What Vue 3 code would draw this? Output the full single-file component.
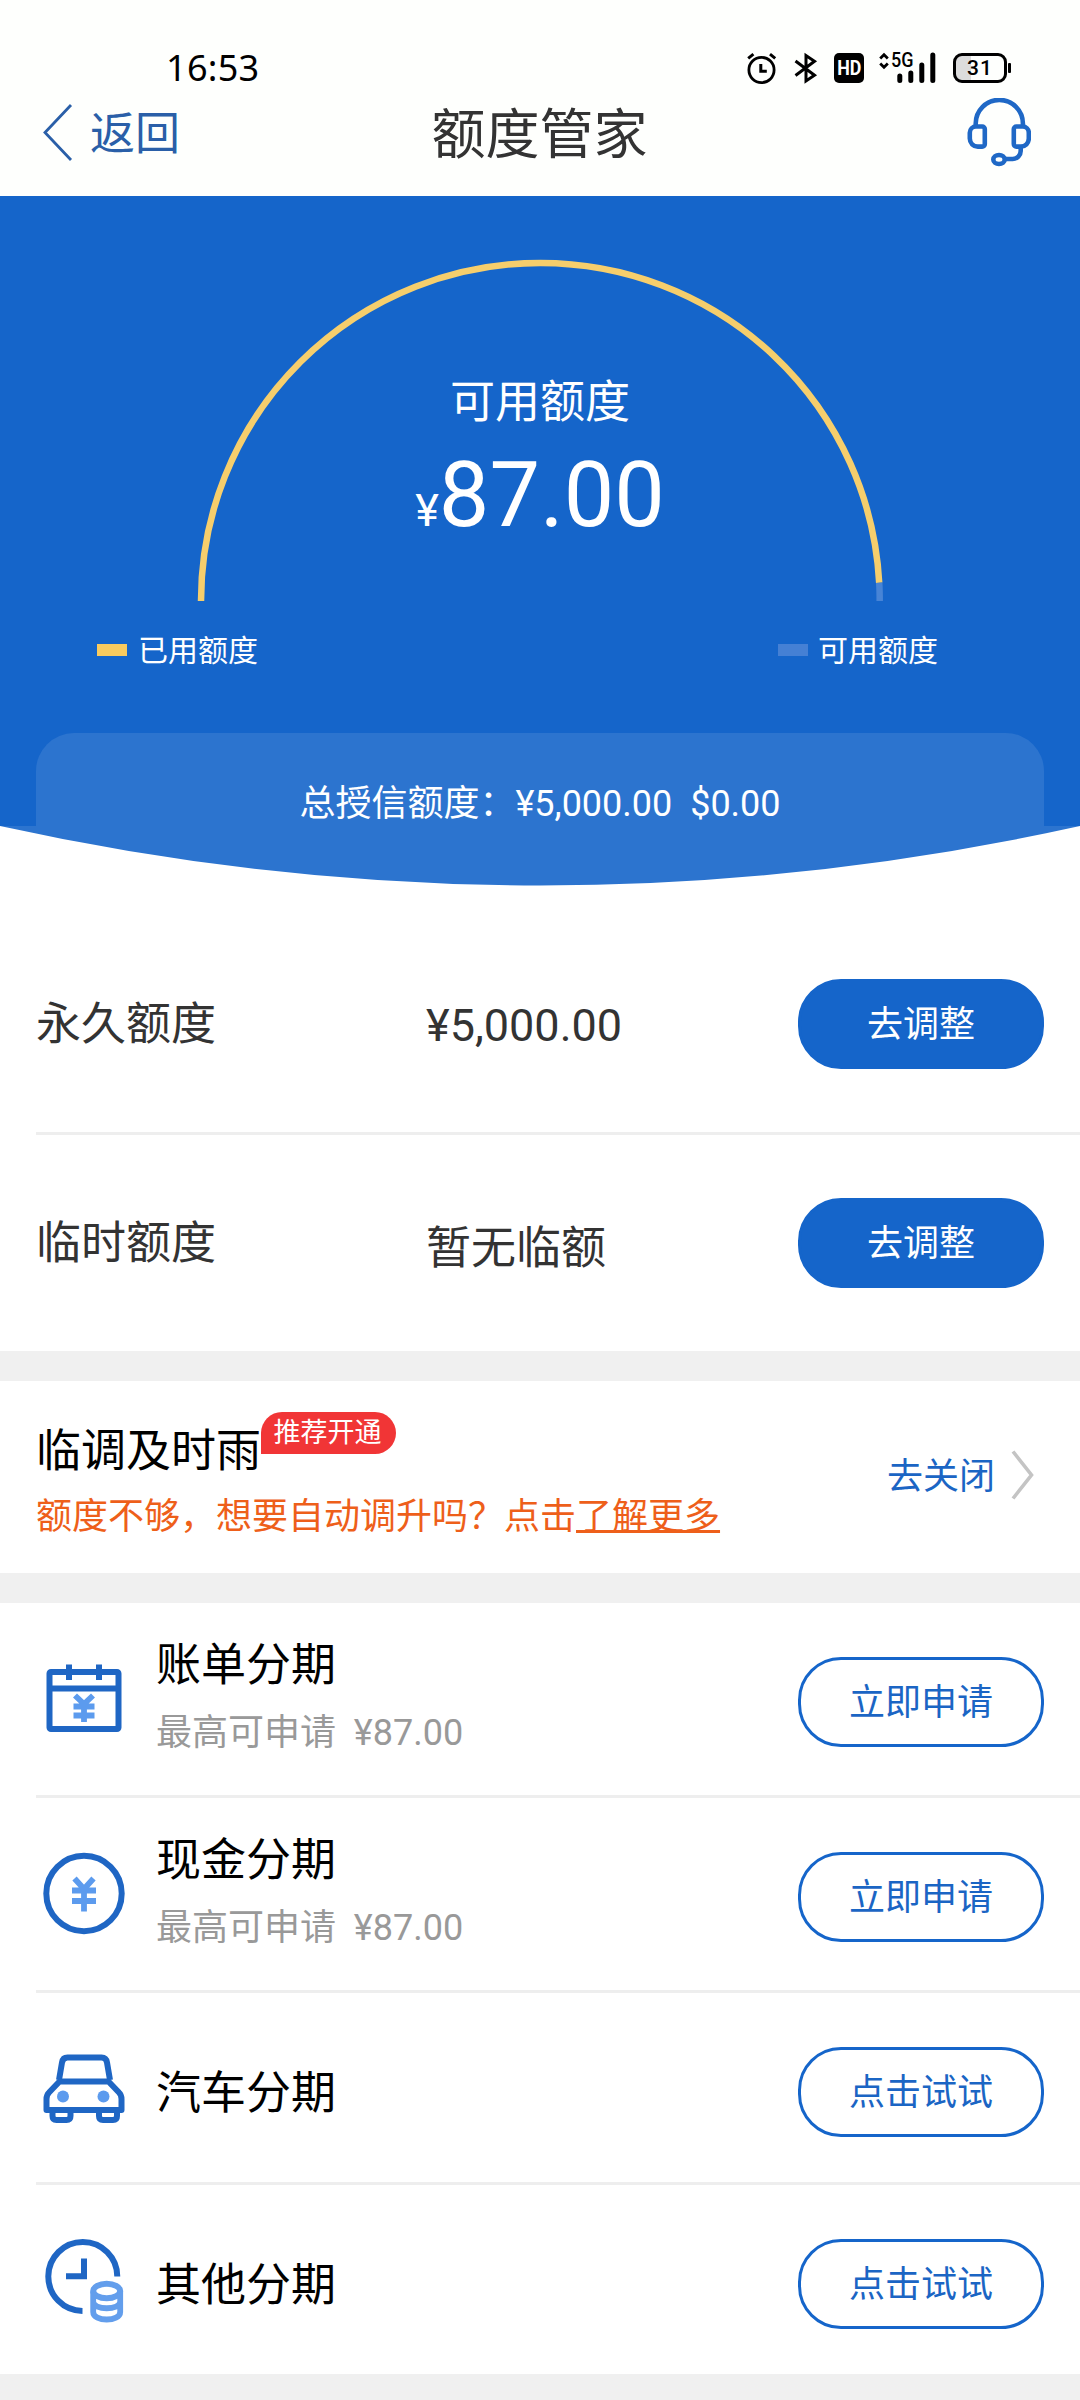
<script setup>
const limits = [
  { name: '永久额度', value: '¥5,000.00' },
  { name: '临时额度', value: '暂无临额' },
]

const plans = [
  { icon: 'bill', title: '账单分期', amount: '¥87.00', action: '立即申请' },
  { icon: 'cash', title: '现金分期', amount: '¥87.00', action: '立即申请' },
  { icon: 'car', title: '汽车分期', action: '点击试试' },
  { icon: 'other', title: '其他分期', action: '点击试试' },
]
</script>

<template>
  <div class="page">
    <header class="top">
      <div class="status">
        <span class="time">16:53</span>
        <div class="status-icons">
          <svg class="alarm" width="30" height="32" viewBox="0 0 30 32" fill="none" stroke="#000">
            <circle cx="14.5" cy="18" r="12.6" stroke-width="2.8" />
            <path d="M13.8 12v7.2h6" stroke-width="3" />
            <path d="M1.2 6.4 6.4 2.2M28.2 6.4 23 2.2" stroke-width="3" />
          </svg>
          <svg class="bt" width="24" height="32" viewBox="0 0 24 32" fill="none" stroke="#000" stroke-width="3">
            <path d="M1.5 9 20.500 23.200 12 29V3.500l8.500 5.800L1.500 23.500" />
          </svg>
          <span class="hd"><b>HD</b></span>
          <div class="signal">
            <span>5G</span>
            <svg width="57" height="32" viewBox="0 0 57 32">
              <path d="M1.200 6.500 5 2.800l3.800 3.700M1.200 11.500 5 15.200l3.800-3.700" fill="none" stroke="#000" stroke-width="2.800" />
              <g stroke="#000" stroke-width="5" stroke-linecap="round">
                <path d="M20.800 24v4.500M31.800 21v7.500M42.800 13v15.500M53.800 3v25.500" />
              </g>
            </svg>
          </div>
          <div class="battery"><span class="cell">31</span><i></i></div>
        </div>
      </div>
      <nav class="nav">
        <a class="back">
          <svg width="30" height="58" viewBox="0 0 30 58" fill="none" stroke="#2a5fa8" stroke-width="2.800">
            <path d="M28 1 2 28.500 28 56" />
          </svg>
          <span>返回</span>
        </a>
        <h1>额度管家</h1>
        <svg class="headset" width="64" height="70" viewBox="0 0 64 70" fill="none" stroke="#1f68c6" stroke-width="4.600">
          <path d="M8.700 28v-2.500a23.600 23.600 0 0 1 47.200 0V28" />
          <path d="M9 28.500h6.200a2.600 2.600 0 0 1 2.600 2.600V46a2.600 2.600 0 0 1-2.600 2.600h-4.400a8 8 0 0 1-8-8V34.700a6.200 6.200 0 0 1 6.200-6.200z" />
          <path d="M55.600 28.500h-6.200a2.600 2.600 0 0 0-2.600 2.600V46a2.600 2.600 0 0 0 2.600 2.600h4.400a8 8 0 0 0 8-8V34.700a6.200 6.200 0 0 0-6.200-6.200z" />
          <path d="M53.700 49.500v3.500a8 8 0 0 1-8 8H38" />
          <ellipse cx="32" cy="61.500" rx="5.700" ry="4.500" />
        </svg>
      </nav>
    </header>

    <section class="hero">
      <div class="gauge">
        <svg width="686" height="342" viewBox="0 0 686 342" fill="none" stroke-width="6.500">
          <path d="M4 342A339.300 338 0 0 1 343.300 4A339.300 338 0 0 1 682.200 323.700" stroke="#f6ce6c" />
          <path d="M682.200 323.700Q682.700 331 682.700 342" stroke="#4784d6" />
        </svg>
        <div class="available">
          <span class="label">可用额度</span>
          <span class="amount"><small>¥</small>87.00</span>
        </div>
      </div>
      <div class="legend">
        <span class="key used"><i></i>已用额度</span>
        <span class="key free"><i></i>可用额度</span>
      </div>
      <div class="total">总授信额度：¥5,000.00&nbsp; $0.00</div>
    </section>
    <svg class="curve" width="1080" height="60" viewBox="0 0 1080 60">
      <path d="M0 0H1080Q540 119 0 0z" fill="#2c74cf" />
    </svg>

    <section class="limits">
      <div v-for="l in limits" :key="l.name" class="limit">
        <span class="name">{{ l.name }}</span>
        <span class="value">{{ l.value }}</span>
        <button class="btn solid">去调整</button>
      </div>
    </section>

    <section class="auto">
      <div class="auto-info">
        <div class="auto-title"><span>临调及时雨</span><em>推荐开通</em></div>
        <p>额度不够，想要自动调升吗？点击<a>了解更多</a></p>
      </div>
      <a class="close"><span>去关闭</span>
        <svg width="24" height="50" viewBox="0 0 24 50" fill="none" stroke="#c4c4c4" stroke-width="3.600">
          <path d="M2 1.500 20.500 25 2 48.500" />
        </svg>
      </a>
    </section>

    <section class="plans">
      <div v-for="p in plans" :key="p.icon" class="plan" :class="{ tall: p.amount }">
        <svg class="icon" width="84" height="90" viewBox="0 0 84 90" fill="none" stroke="#1f66c4" stroke-width="6">
          <template v-if="p.icon === 'bill'">
            <rect x="7.500" y="18" width="69" height="57" rx="1.500" />
            <path d="M7 34.500h70M27 10.500V26M57 10.500V26" />
            <path d="M33 41.500l9 8.500 9-8.500M42 49v19M31.500 52.500h21M31.500 61.500h21" stroke="#5c9bee" stroke-width="5.800" />
          </template>
          <template v-else-if="p.icon === 'cash'">
            <circle cx="42" cy="44.500" r="37.700" />
            <path d="M32.500 29.500 42 40l9.500-10.500M42 38v24.500M30 41.500h24M30 52h24" stroke="#5c9bee" stroke-width="5.800" />
          </template>
          <template v-else-if="p.icon === 'car'">
            <path d="M17 34 20 16.500q.8-5 5.500-5h34q4.700 0 5.500 5L68 34" />
            <path d="M17.500 35.500h49l10.500 11q2.500 2.500 2.500 6.500v11h-75V53q0-4 2.500-6.500z" stroke-linejoin="round" />
            <path d="M10.500 64v6q0 4 4 4h10q4 0 4-4v-6M57 64v6q0 4 4 4h10q4 0 4-4v-6" />
            <circle cx="21" cy="50.500" r="6" fill="#5c9bee" stroke="none" />
            <circle cx="61.500" cy="50.500" r="6" fill="#5c9bee" stroke="none" />
          </template>
          <template v-else>
            <path d="M75.300 38.500A34.500 34.500 0 1 0 40.500 73M42 20.500v17.800H24" />
            <g stroke="#639eec">
              <ellipse cx="64.700" cy="53" rx="13.500" ry="7.300" />
              <path d="M51.200 53.500V74c0 10 27 10 27 0V53.500M51.200 63.500c0 9 27 9 27 0" stroke-width="5.800" />
            </g>
          </template>
        </svg>
        <div class="plan-text">
          <strong>{{ p.title }}</strong>
          <span v-if="p.amount">最高可申请&nbsp; {{ p.amount }}</span>
        </div>
        <button class="btn outline">{{ p.action }}</button>
      </div>
    </section>
  </div>
</template>

<style>
body {
  margin: 0;
  background: #f0f0f0;
}
</style>

<style scoped>
.page {
  width: 1080px;
  height: 2400px;
  overflow: hidden;
  background: #f0f0f0;
  color: #333;
  font-family: Roboto, 'Noto Sans CJK SC', sans-serif;
}
.top {
  height: 196px;
  background: #fefffd;
}
.status {
  box-sizing: border-box;
  height: 90px;
  padding: 52px 69px 0 166px;
  display: flex;
  justify-content: space-between;
  align-items: flex-start;
  color: #000;
}
.time {
  font: 36px/32px 'Noto Sans', sans-serif;
  letter-spacing: 0.3px;
}
.status-icons {
  display: flex;
  align-items: center;
  height: 32px;
}
.bt { margin-left: 17px; }
.hd {
  display: flex;
  justify-content: center;
  width: 30px;
  height: 30px;
  margin-left: 16px;
  border-radius: 5px;
  background: #000;
  color: #fff;
}
.hd b {
  font: bold 21px/31px Roboto, sans-serif;
  transform: scaleX(0.85);
}
.signal {
  display: grid;
  height: 32px;
  margin-left: 15px;
}
.signal > * { grid-area: 1 / 1; }
.signal span {
  padding-left: 12px;
  font: 500 20px/17px Roboto, sans-serif;
  transform: scaleX(0.9);
  transform-origin: 12px 50%;
}
.battery {
  display: flex;
  align-items: center;
  margin-left: 17px;
}
.cell {
  box-sizing: border-box;
  width: 54px;
  height: 30px;
  border: 3px solid #000;
  border-radius: 9px;
  background: linear-gradient(90deg, #dcdcdc 15px, transparent 15px);
  font: 500 21px/25px Roboto, sans-serif;
  letter-spacing: 1px;
  text-align: center;
}
.battery i {
  width: 3px;
  height: 10px;
  margin-left: 1px;
  border-radius: 1px;
  background: #000;
}
.nav {
  box-sizing: border-box;
  height: 106px;
  padding: 0 49px 20px 43px;
  display: grid;
  grid-template-columns: 1fr auto 1fr;
  align-items: center;
}
.back {
  display: flex;
  align-items: center;
  gap: 17px;
  color: #2a5fa8;
  font-size: 45px;
  line-height: 58px;
}
.back span { padding-top: 3px; }
.nav h1 {
  margin: 0;
  padding: 6px 0 0 5px;
  font-size: 54px;
  font-weight: 400;
  line-height: 70px;
}
.headset { justify-self: end; }
.hero {
  box-sizing: border-box;
  height: 630px;
  padding-top: 63px;
  display: flex;
  flex-direction: column;
  background: #1565ca;
  color: #fff;
}
.gauge {
  display: grid;
  justify-content: center;
  height: 342px;
}
.gauge > * { grid-area: 1 / 1; }
.available {
  display: flex;
  flex-direction: column;
  align-items: center;
  padding-top: 114px;
}
.label { font-size: 45px; line-height: 60px; }
.amount { font-size: 90px; line-height: 106px; margin-top: 10px; }
.amount small { font-size: 45px; }
.legend {
  display: flex;
  justify-content: space-between;
  padding: 0 142px 0 97px;
  margin-top: 30px;
  font-size: 30px;
  line-height: 40px;
}
.key { display: flex; align-items: center; gap: 11px; }
.key i { width: 30px; height: 12px; margin-bottom: 3px; background: #f9cb5f; }
.key.free { gap: 10px; }
.key.free i { background: #4580d4; }
.total {
  flex: none;
  box-sizing: border-box;
  height: 93px;
  margin: auto 36px 0;
  padding-top: 49px;
  border-radius: 38px 38px 0 0;
  background: #2c74cf;
  font-size: 36px;
  line-height: 45px;
  text-align: center;
}
.curve { display: block; background: #fff; }
.limits {
  padding: 30px 0 0 36px;
  background: #fff;
  font-size: 45px;
}
.limit {
  display: flex;
  align-items: center;
  height: 216px;
  padding-right: 36px;
}
.limit + .limit { border-top: 3px solid #eee; }
.name { width: 390px; padding-bottom: 7px; }
.value { flex: 1; padding-top: 3px; }
.btn {
  flex: none;
  box-sizing: border-box;
  width: 246px;
  height: 90px;
  padding: 2px 0 0;
  border: 3px solid #1565ca;
  border-radius: 43px;
  background: #1565ca;
  color: #fff;
  font: 36px/82px Roboto, 'Noto Sans CJK SC', sans-serif;
}
.auto {
  box-sizing: border-box;
  height: 192px;
  margin: 30px 0;
  padding: 31px 45px 0 36px;
  display: flex;
  justify-content: space-between;
  background: #fff;
}
.auto-title {
  display: flex;
  align-items: flex-start;
  color: #000;
  font-size: 45px;
}
.auto-title span { line-height: 80px; }
.auto-title em {
  box-sizing: border-box;
  width: 135px;
  height: 42px;
  padding-right: 2px;
  border-radius: 21px 21px 21px 0;
  background: #f13536;
  color: #fff;
  font-size: 27px;
  font-style: normal;
  line-height: 43px;
  text-align: center;
}
.auto p {
  margin: 1px 0 0;
  color: #ee5f1a;
  font-size: 36px;
  line-height: 48px;
}
.auto p a {
  text-decoration: underline;
  text-decoration-thickness: 3px;
  text-underline-offset: 1px;
}
.close {
  display: flex;
  align-items: center;
  gap: 16px;
  height: 125px;
  color: #1b65c4;
  font-size: 36px;
}
.close span { padding-bottom: 4px; }
.plans { padding-left: 36px; background: #fff; }
.plan {
  display: flex;
  align-items: center;
  height: 189px;
  padding-right: 36px;
}
.plan.tall { height: 192px; }
.plan + .plan { border-top: 3px solid #eee; }
.icon { margin: 6px 0 0 6px; flex: none; }
.plan.tall .icon { margin-top: 0; }
.plan-text {
  flex: 1;
  display: flex;
  flex-direction: column;
  gap: 13px;
  margin-left: 30px;
  padding-top: 12px;
}
.plan-text strong {
  color: #000;
  font-size: 45px;
  font-weight: 400;
  line-height: 60px;
}
.plan-text span {
  color: #999;
  font-size: 36px;
  line-height: 48px;
}
.btn.outline {
  margin-top: 9px;
  background: #fff;
  color: #1b65c4;
}
.plan.tall .btn { margin-top: 5px; }
.plan.tall .plan-text { padding: 0 0 6px; }
</style>
